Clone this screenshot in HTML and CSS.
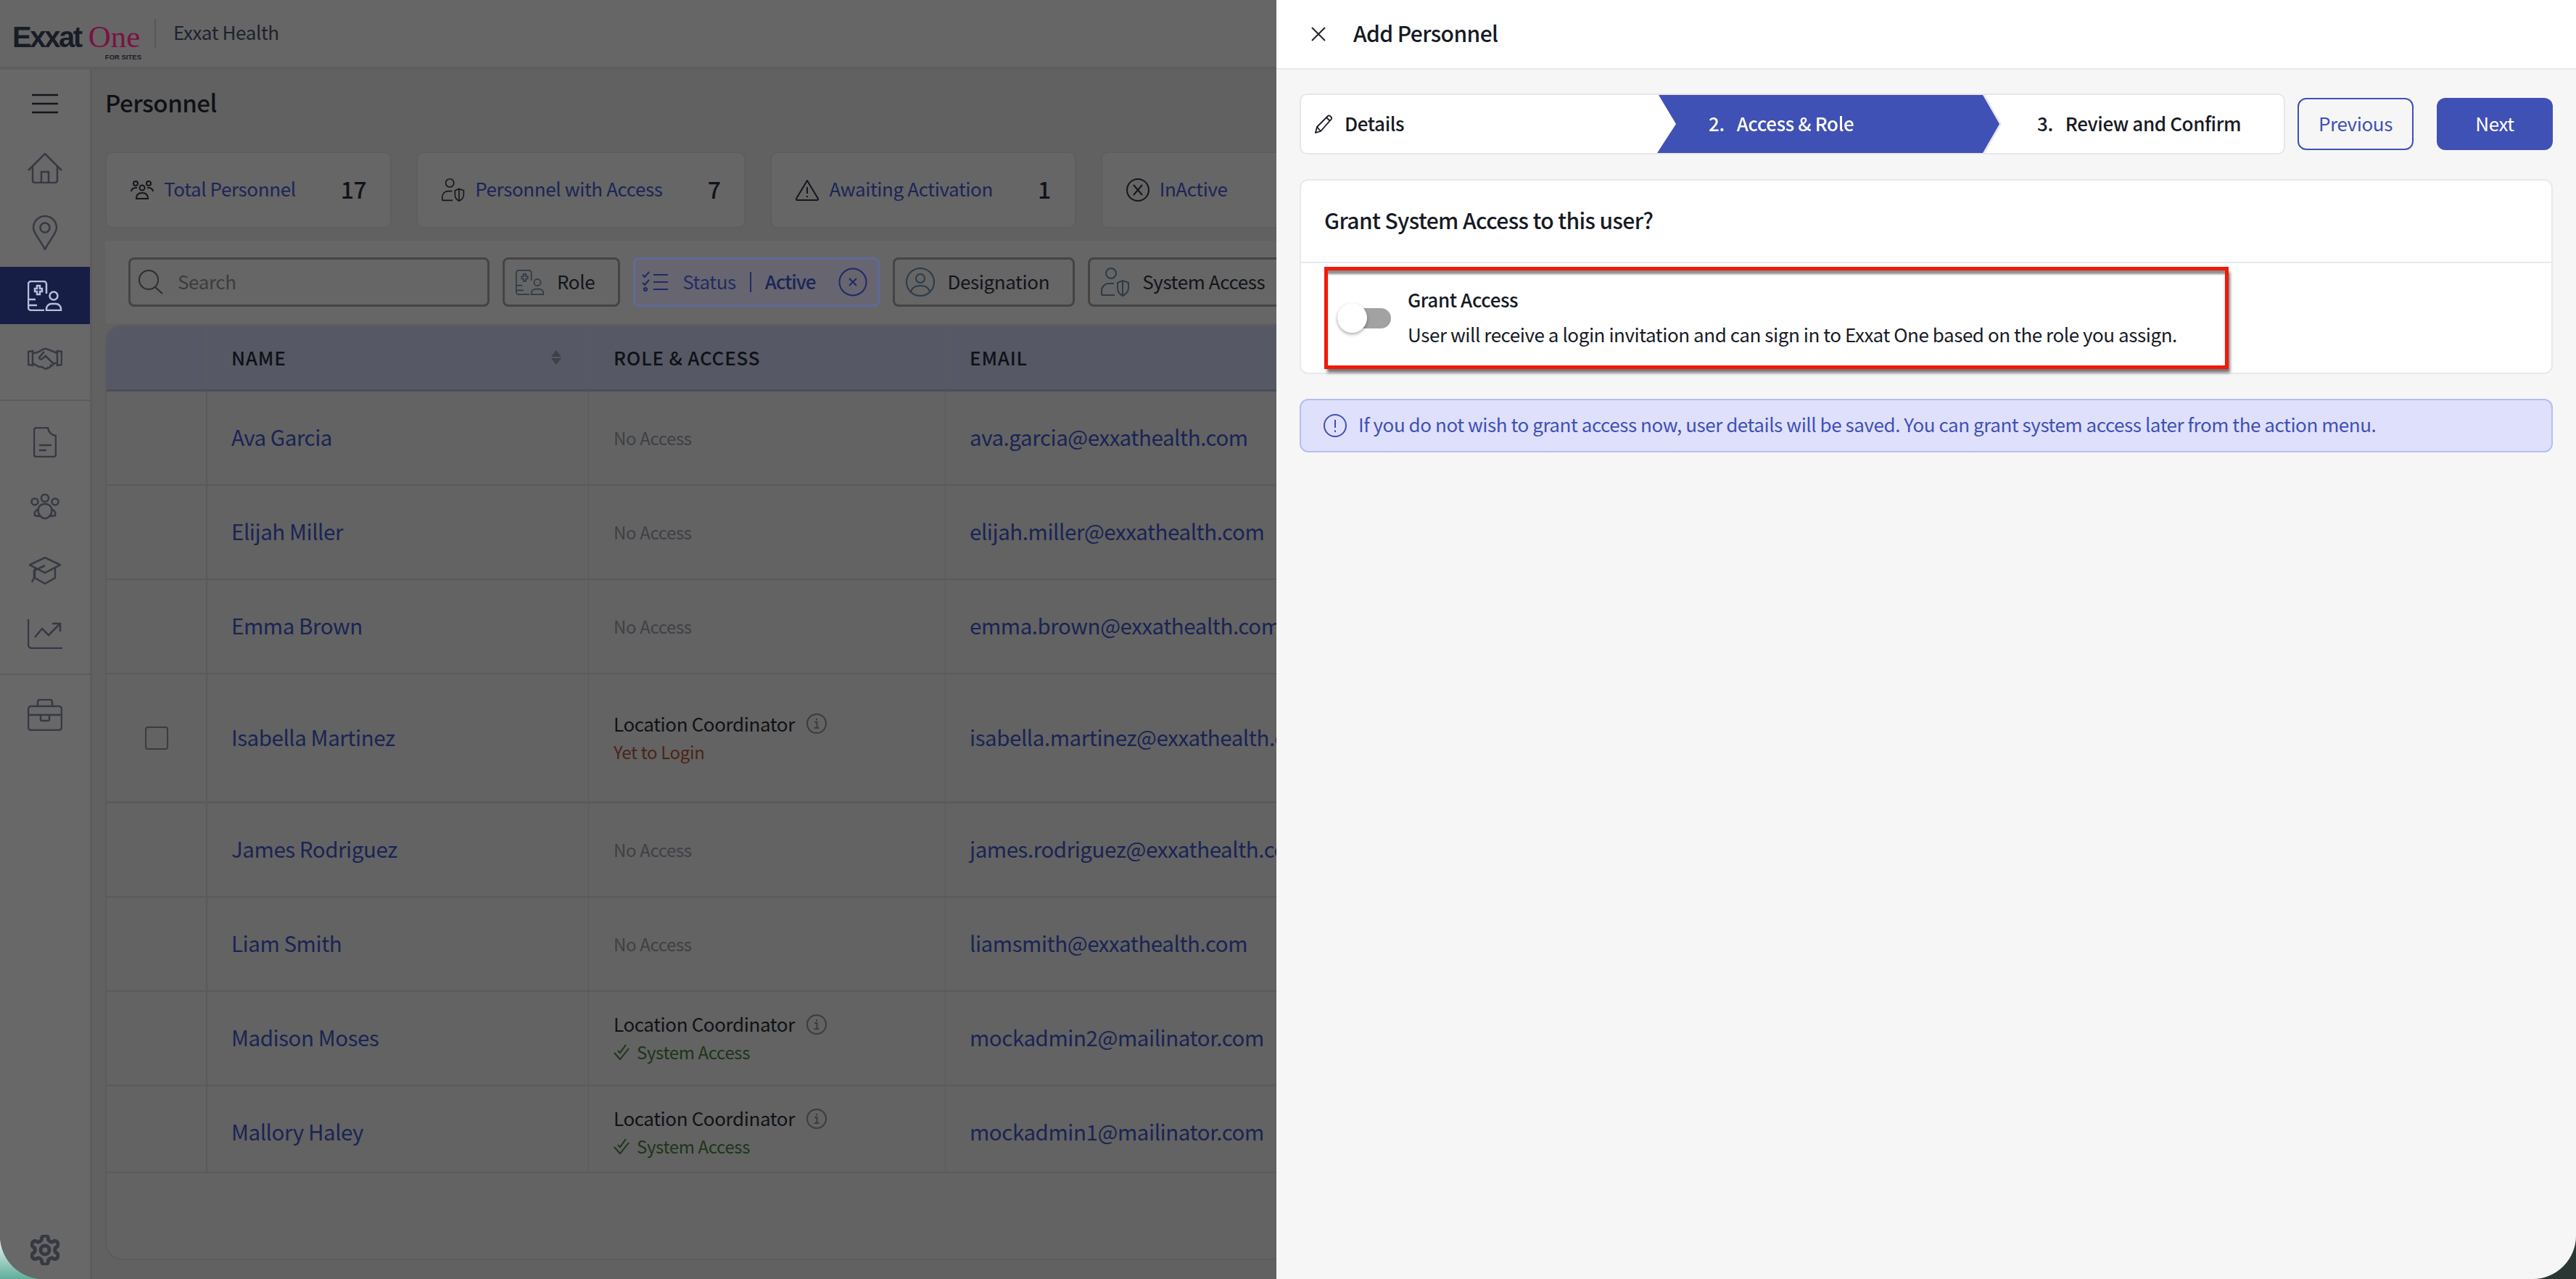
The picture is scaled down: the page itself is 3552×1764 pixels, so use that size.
FILE: index.html
```html
<!DOCTYPE html>
<html lang="en">
<head>
<meta charset="UTF-8" />
<title>Personnel - Exxat One</title>
<link rel="stylesheet" href="styles.css">
</head>
<body>
<svg class="defs" width="0" height="0">
  <symbol id="i-role" viewBox="0 0 48 42">
    <path d="M23 41H5a4 4 0 0 1-4-4V5a4 4 0 0 1 4-4h17a4 4 0 0 1 4 4v13" />
    <path d="M10 11h3V7h4v4h3v4h-3v4h-4v-4h-3z" />
    <path d="M1 26h10M1 34h12" />
    <circle cx="36" cy="21" r="5.5" />
    <path d="M26 41v-2a7 7 0 0 1 7-7h6a7 7 0 0 1 7 7v2z" />
  </symbol>
  <symbol id="i-user-shield" viewBox="0 0 40 40">
    <circle cx="14" cy="8" r="7" />
    <path d="M1 38v-6a10 10 0 0 1 10-10h7M1 38h18" />
    <path d="M23 21l7-3 8 3v7c0 5-4 9-8 11-4-2-7-6-7-11zM30 18v21" />
  </symbol>
</svg>

<div class="window">
  <header class="topbar">
    <div class="logo">
      <div class="logo-mark"><span class="logo-exxat">Exxat</span><span class="logo-one">One</span></div>
      <div class="logo-sub">FOR SITES</div>
    </div>
    <div class="org">Exxat Health</div>
  </header>

  <div class="main">
    <nav class="sidebar">
      <div class="nav-item nav-menu">
        <svg width="36" height="28" viewBox="0 0 36 28"><path d="M0 2h36M0 14h36M0 26h36" /></svg>
      </div>
      <div class="nav-item nav-home">
        <svg width="48" height="42" viewBox="0 0 48 42"><path d="M1 24L24 1l23 23M7 18v20a3 3 0 0 0 3 3h28a3 3 0 0 0 3-3V18M19 41V26h10v15" /></svg>
      </div>
      <div class="nav-item nav-pin">
        <svg width="34" height="48" viewBox="0 0 34 48"><path d="M17 47C10 33 1 25 1 17a16 16 0 0 1 32 0c0 8-9 16-16 30z" /><circle cx="17" cy="17" r="6.5" /></svg>
      </div>
      <div class="nav-item nav-active">
        <svg width="48" height="42"><use href="#i-role" /></svg>
      </div>
      <div class="nav-item nav-deal">
        <svg width="48" height="32" viewBox="0 0 48 32"><path d="M1 6l6-1v20l-6-1zM47 6l-6-1v20l6-1zM7 8c5 0 8-1 12-4 3-2 6-3 9-1l13 5M41 22l-6 0-10-10-5 4c-2 1-4 0-4-2l7-8M35 22c1 2-1 4-3 3 0 2-2 4-4 3-1 2-3 2-5 1l-3-2-4 0-9-5" /></svg>
      </div>
      <div class="nav-item nav-doc">
        <svg width="32" height="42" viewBox="0 0 32 42"><path d="M4 1h16c1 6 5 10 11 11v26a3 3 0 0 1-3 3H4a3 3 0 0 1-3-3V4a3 3 0 0 1 3-3zM8 25h17M8 32h10" /></svg>
      </div>
      <div class="nav-item nav-people">
        <svg width="42" height="36" viewBox="0 0 42 36"><circle cx="21" cy="6" r="5" /><circle cx="7" cy="11" r="4.5" /><circle cx="35" cy="11" r="4.5" /><path d="M12 21c0-4 4-7 9-7s9 3 9 7c5 2 6 6 5 9-4 1-6 1-8 1-3 4-9 4-12 0-2 0-4 0-8-1-1-3 0-7 5-9zM12 21c-1 4 1 8 3 10M30 21c1 4-1 8-3 10" /></svg>
      </div>
      <div class="nav-item nav-grad">
        <svg width="44" height="38" viewBox="0 0 44 38"><path d="M22 1l21 10-21 11L1 11zM8 15v14l14 8 14-8V15M22 12L7 19v10l-3 6" /></svg>
      </div>
      <div class="nav-item nav-chart">
        <svg width="48" height="42" viewBox="0 0 48 42"><path d="M1 1v35a5 5 0 0 0 5 5h42M10 26l10-12 9 9 16-16M34 7h11v11" /></svg>
      </div>
      <div class="nav-item nav-bag">
        <svg width="48" height="44" viewBox="0 0 48 44"><rect x="1" y="10" width="46" height="33" rx="4" /><path d="M14 10V4a3 3 0 0 1 3-3h14a3 3 0 0 1 3 3v6M1 22h17M30 22h17M18 22h12v6a2 2 0 0 1-2 2h-8a2 2 0 0 1-2-2z" /></svg>
      </div>
      <div class="nav-item nav-gear">
        <svg width="40" height="42" viewBox="2 1.500 20 21"><path d="M12.220 2h-.44a2 2 0 0 0-2 2v.18a2 2 0 0 1-1 1.730l-.43.25a2 2 0 0 1-2 0l-.15-.08a2 2 0 0 0-2.730.73l-.22.38a2 2 0 0 0 .73 2.730l.15.1a2 2 0 0 1 1 1.720v.51a2 2 0 0 1-1 1.740l-.15.09a2 2 0 0 0-.73 2.730l.22.38a2 2 0 0 0 2.730.73l.15-.08a2 2 0 0 1 2 0l.43.25a2 2 0 0 1 1 1.730V20a2 2 0 0 0 2 2h.44a2 2 0 0 0 2-2v-.18a2 2 0 0 1 1-1.730l.43-.25a2 2 0 0 1 2 0l.15.08a2 2 0 0 0 2.730-.73l.22-.39a2 2 0 0 0-.73-2.730l-.15-.08a2 2 0 0 1-1-1.740v-.5a2 2 0 0 1 1-1.740l.15-.09a2 2 0 0 0 .73-2.730l-.22-.38a2 2 0 0 0-2.730-.73l-.15.08a2 2 0 0 1-2 0l-.43-.25a2 2 0 0 1-1-1.730V4a2 2 0 0 0-2-2z" /><circle cx="12" cy="12" r="3" /></svg>
      </div>
    </nav>

    <section class="content">
      <h1 class="page-title">Personnel</h1>

      <div class="stats">
        <div class="stat">
          <svg class="stat-icon" width="32" height="26" viewBox="0 0 32 26"><circle cx="16" cy="10" r="3.500" /><circle cx="7" cy="4" r="3" /><circle cx="25" cy="4" r="3" /><path d="M1 15c0-3 3-5 6-5h2M31 15c0-3-3-5-6-5h-2M8 25c0-5 3-8 8-8s8 3 8 8z" /></svg>
          <span class="stat-label">Total Personnel</span><b class="stat-num">17</b>
        </div>
        <div class="stat">
          <svg class="stat-icon ln" width="32" height="32"><use href="#i-user-shield" /></svg>
          <span class="stat-label">Personnel with Access</span><b class="stat-num">7</b>
        </div>
        <div class="stat">
          <svg class="stat-icon" width="32" height="29" viewBox="0 0 32 29"><path d="M16 1l15 25a1.500 1.500 0 0 1-1 2H2a1.500 1.500 0 0 1-1-2zM16 10v9M16 22v2" /></svg>
          <span class="stat-label">Awaiting Activation</span><b class="stat-num">1</b>
        </div>
        <div class="stat">
          <svg class="stat-icon" width="32" height="32" viewBox="0 0 32 32"><circle cx="16" cy="16" r="15" /><path d="M10 9l12 14M22 9L10 23" /></svg>
          <span class="stat-label">InActive</span><b class="stat-num">9</b>
        </div>
      </div>

      <div class="filters">
        <div class="search">
          <svg width="34" height="34" viewBox="0 0 34 34"><circle cx="14" cy="14" r="13" /><path d="M23 24l10 9" /></svg>
          <span>Search</span>
        </div>
        <div class="chip">
          <svg class="ln" width="40" height="35"><use href="#i-role" /></svg>
          <span>Role</span>
        </div>
        <div class="chip chip-on">
          <svg width="36" height="30" viewBox="0 0 36 30"><path d="M1 5l3 3 6-7M1 16l3 3 6-7M16 5h20M16 15h20M16 25h20" /><circle cx="5" cy="25" r="2" /></svg>
          <span class="chip-key">Status</span>
          <i class="chip-sep"></i>
          <b class="chip-val">Active</b>
          <svg class="chip-x" width="40" height="40" viewBox="0 0 40 40"><circle cx="20" cy="20" r="18.500" /><path d="M15 15l10 10M25 15L15 25" /></svg>
        </div>
        <div class="chip">
          <svg class="ln" width="40" height="40" viewBox="0 0 40 40"><circle cx="20" cy="20" r="19" /><circle cx="20" cy="15" r="6" /><path d="M7 33c2-6 7-8 13-8s11 2 13 8" /></svg>
          <span>Designation</span>
        </div>
        <div class="chip">
          <svg class="ln" width="40" height="40"><use href="#i-user-shield" /></svg>
          <span>System Access</span>
        </div>
      </div>

      <div class="table">
        <div class="row head">
          <div class="cell cell-check"></div>
          <div class="cell cell-name">NAME
            <svg class="sort" width="16" height="20" viewBox="0 0 16 20"><path d="M8 0l7 9H1zM1 11h14l-7 9z" /></svg>
          </div>
          <div class="cell cell-role">ROLE &amp; ACCESS</div>
          <div class="cell cell-mail">EMAIL</div>
        </div>
        <div class="rows">
          <div class="row">
            <div class="cell cell-check"></div>
            <div class="cell cell-name">Ava Garcia</div>
            <div class="cell cell-role"><span class="none">No Access</span></div>
            <div class="cell cell-mail">ava.garcia@exxathealth.com</div>
          </div>
          <div class="row">
            <div class="cell cell-check"></div>
            <div class="cell cell-name">Elijah Miller</div>
            <div class="cell cell-role"><span class="none">No Access</span></div>
            <div class="cell cell-mail">elijah.miller@exxathealth.com</div>
          </div>
          <div class="row">
            <div class="cell cell-check"></div>
            <div class="cell cell-name">Emma Brown</div>
            <div class="cell cell-role"><span class="none">No Access</span></div>
            <div class="cell cell-mail">emma.brown@exxathealth.com</div>
          </div>
          <div class="row row-tall">
            <div class="cell cell-check"><i class="checkbox"></i></div>
            <div class="cell cell-name">Isabella Martinez</div>
            <div class="cell cell-role">
              <div class="role-name">Location Coordinator
                <svg width="28" height="28" viewBox="0 0 28 28"><circle cx="14" cy="14" r="13" /><path d="M11 12h3.500v8M10.500 20h7M14 7v2.500" /></svg>
              </div>
              <div class="role-wait">Yet to Login</div>
            </div>
            <div class="cell cell-mail">isabella.martinez@exxathealth.com</div>
          </div>
          <div class="row">
            <div class="cell cell-check"></div>
            <div class="cell cell-name">James Rodriguez</div>
            <div class="cell cell-role"><span class="none">No Access</span></div>
            <div class="cell cell-mail">james.rodriguez@exxathealth.com</div>
          </div>
          <div class="row">
            <div class="cell cell-check"></div>
            <div class="cell cell-name">Liam Smith</div>
            <div class="cell cell-role"><span class="none">No Access</span></div>
            <div class="cell cell-mail">liamsmith@exxathealth.com</div>
          </div>
          <div class="row">
            <div class="cell cell-check"></div>
            <div class="cell cell-name">Madison Moses</div>
            <div class="cell cell-role">
              <div class="role-name">Location Coordinator
                <svg width="28" height="28" viewBox="0 0 28 28"><circle cx="14" cy="14" r="13" /><path d="M11 12h3.500v8M10.500 20h7M14 7v2.500" /></svg>
              </div>
              <div class="role-ok">
                <svg width="22" height="22" viewBox="0 0 22 22"><path d="M1 12l8 9L21 6M6 9l3 3 8-11" /></svg>
                System Access
              </div>
            </div>
            <div class="cell cell-mail">mockadmin2@mailinator.com</div>
          </div>
          <div class="row">
            <div class="cell cell-check"></div>
            <div class="cell cell-name">Mallory Haley</div>
            <div class="cell cell-role">
              <div class="role-name">Location Coordinator
                <svg width="28" height="28" viewBox="0 0 28 28"><circle cx="14" cy="14" r="13" /><path d="M11 12h3.500v8M10.500 20h7M14 7v2.500" /></svg>
              </div>
              <div class="role-ok">
                <svg width="22" height="22" viewBox="0 0 22 22"><path d="M1 12l8 9L21 6M6 9l3 3 8-11" /></svg>
                System Access
              </div>
            </div>
            <div class="cell cell-mail">mockadmin1@mailinator.com</div>
          </div>
        </div>
      </div>
    </section>
  </div>

  <aside class="drawer">
    <div class="drawer-head">
      <svg width="20" height="20" viewBox="0 0 20 20"><path d="M1 1l18 18M19 1L1 19" /></svg>
      <h2>Add Personnel</h2>
    </div>
    <div class="drawer-body">
      <div class="wizard">
        <div class="stepper">
          <div class="step step-done">
            <svg width="26" height="26" viewBox="0 0 26 26"><path d="M1 25l2-8L18 2c2-2 6 2 5 4L8 23zM3 17l5 6M16 4l5 5" /></svg>
            Details
          </div>
          <div class="step-outline">
            <div class="step step-current"><span class="step-no">2.</span>Access &amp; Role</div>
          </div>
          <div class="step step-next"><span class="step-no">3.</span>Review and Confirm</div>
        </div>
        <button class="btn btn-ghost">Previous</button>
        <button class="btn btn-fill">Next</button>
      </div>

      <div class="card">
        <div class="card-title">Grant System Access to this user?</div>
        <div class="callout">
          <div class="toggle"><i class="toggle-knob"></i></div>
          <div class="callout-text">
            <div class="callout-title">Grant Access</div>
            <div class="callout-desc">User will receive a login invitation and can sign in to Exxat One based on the role you assign.</div>
          </div>
        </div>
      </div>

      <div class="notice">
        <svg width="32" height="32" viewBox="0 0 32 32"><circle cx="16" cy="16" r="15" /><path d="M16 8v11M16 22.500v2.500" /></svg>
        <span>If you do not wish to grant access now, user details will be saved. You can grant system access later from the action menu.</span>
      </div>
    </div>
  </aside>
</div>
</body>
</html>
```

FILE: styles.css
```css
* {
  box-sizing: border-box;
  letter-spacing: -.015em;
}

html, body {
  margin: 0;
  height: 100%;
  overflow: hidden;
}

body {
  font-family: "Noto Sans CJK SC", "Noto Sans", sans-serif;
  background:
    linear-gradient(180deg, #e6f1ee 0, #e6f1ee 97%, #5fae9c 100%) left / 50% 100% no-repeat,
    #2b3733;
  color: #0f1116;
}

svg {
  fill: none;
  stroke: currentColor;
  stroke-width: 2;
  flex: none;
}

.defs {
  position: absolute;
}

.window {
  position: relative;
  width: 3552px;
  height: 1764px;
  overflow: hidden;
  border-radius: 0 0 60px 60px;
  background: #616161;
}

/* top bar */
.topbar {
  display: flex;
  align-items: center;
  height: 96px;
  padding-left: 17px;
  background: #666;
  border-bottom: 4px solid #5e5e62;
}

.logo {
  width: 178px;
  padding-top: 22px;
}

.logo-mark {
  display: flex;
  align-items: baseline;
  height: 40px;
  line-height: 40px;
}

.logo-exxat {
  font-family: "Liberation Sans", sans-serif;
  font-weight: bold;
  font-size: 40px;
  letter-spacing: -2.400px;
  color: #181c26;
}

.logo-one {
  margin-left: 10px;
  font-family: "Liberation Serif", serif;
  font-size: 43px;
  letter-spacing: 0;
  color: #7c1143;
}

.logo-sub {
  margin-top: 3px;
  text-align: right;
  font-family: "Liberation Sans", sans-serif;
  font-size: 9.500px;
  line-height: 10px;
  letter-spacing: 0;
  font-weight: bold;
  color: #181c26;
}

.org {
  margin: 0 0 0 18px;
  padding: 0 0 4px 24px;
  height: 40px;
  line-height: 36px;
  border-left: 2px solid #55565c;
  font-size: 26px;
  color: #1d222e;
}

.main {
  display: flex;
  height: 1668px;
}

/* sidebar */
.sidebar {
  position: relative;
  flex: none;
  width: 127px;
  background: #686868;
  border-right: 3px solid #5c5c5e;
  color: #363944;
}

.sidebar svg {
  stroke-width: 2.500;
}

.nav-item {
  display: flex;
  align-items: center;
  justify-content: center;
}

.nav-menu { height: 94px; color: #14161c; }
.nav-home { height: 84px; }
.nav-pin { height: 94px; }
.nav-active { height: 79px; background: #161e46; color: #b9bedb; }
.nav-deal { height: 106px; padding-bottom: 8px; border-bottom: 2px solid #5c5c5e; }
.nav-doc { height: 114px; }
.nav-people { height: 64px; }
.nav-grad { height: 112px; }
.nav-chart { height: 88px; padding-bottom: 25px; border-bottom: 2px solid #5c5c5e; }
.nav-bag { height: 110px; }

.nav-gear {
  position: absolute;
  left: 0;
  right: 0;
  bottom: 19px;
}

/* page */
.content {
  flex: 1;
  min-width: 0;
  padding-left: 18px;
  overflow: hidden;
}

.page-title {
  margin: 0;
  height: 113px;
  line-height: 90px;
  font-size: 33px;
  font-weight: 500;
  color: #0f1116;
}

.stats {
  display: flex;
  gap: 34px;
}

.stat {
  display: flex;
  flex: none;
  align-items: center;
  height: 106px;
  padding: 0 33px;
  background: #666;
  border: 2px solid #5e5e5e;
  border-radius: 10px;
  color: #14161c;
}

.stat-icon {
  margin-right: 14px;
}

.ln {
  stroke-width: 2;
}

.stat-label {
  margin-bottom: 4px;
  font-size: 26px;
  line-height: 36px;
  color: #1b2556;
}

.stat-num {
  margin: 0 0 4px 62px;
  font-size: 32px;
  line-height: 36px;
  font-weight: 500;
  color: #11131a;
}

.stat:last-child .stat-num {
  margin-left: 68px;
}

.filters {
  display: flex;
  gap: 18px;
  align-items: center;
  height: 114px;
  margin-top: 17px;
  padding-left: 32px;
  background: #666;
}

.search, .chip {
  display: flex;
  flex: none;
  align-items: center;
  height: 68px;
  font-size: 26px;
  border: 3px solid #444;
  border-radius: 8px;
}

.search {
  width: 498px;
  padding-left: 11px;
  color: #2e2e30;
}

.search span, .chip span, .chip b {
  margin-bottom: 3px;
}

.search span {
  margin-left: 20px;
  color: #3c3c3e;
}

.chip {
  padding: 0 32px 0 15px;
  color: #12141a;
}

.chip > svg {
  margin-right: 17px;
  color: #2d3a48;
}

.chip-on {
  border: 3px solid #5f6a9a;
  background: #676570;
  padding: 0 14px 0 9px;
  color: #1f2a62;
}

.chip-on > svg {
  color: #1f2a62;
  margin-right: 20px;
}

.chip-key {
  color: #222c63;
}

.chip-sep {
  width: 2px;
  height: 28px;
  margin: 0 19px;
  background: #222c63;
}

.chip-val {
  font-weight: 500;
  letter-spacing: -.04em;
  color: #1b2556;
}

.chip-on > .chip-x {
  margin: 0 0 0 32px;
}

/* table */
.table {
  margin-top: 2px;
  height: 1290px;
  border: 2px solid #5b5b5f;
  border-radius: 24px 0 0 24px;
  border-right: 0;
  overflow: hidden;
  background: #636363;
}

.row {
  display: flex;
  width: 2000px;
  height: 130px;
  border-bottom: 2px solid #5a5a5e;
}

.row-tall {
  height: 178px;
  border-bottom-width: 3px;
}

.head {
  height: 90px;
  background: #565865;
  border-bottom: 3px solid #4c4d58;
  color: #0f1116;
}

.rows {
  height: 1078px;
  overflow: hidden;
  border-bottom: 2px solid #5a5a5e;
}

.cell {
  display: flex;
  flex: none;
  flex-direction: column;
  justify-content: center;
  align-items: flex-start;
  padding-bottom: 4px;
  border-right: 1px solid #5a5a5e;
}

.cell-check {
  width: 139px;
  align-items: center;
  padding-bottom: 0;
  border-right: 2px solid #5a5a5e;
}

.cell-name {
  position: relative;
  width: 526px;
  padding-left: 33px;
  font-size: 29.500px;
  color: #1a2454;
}

.head .cell-name, .head .cell-role, .head .cell-mail {
  padding-bottom: 2px;
  font-size: 26px;
  font-weight: 500;
  letter-spacing: .03em;
  color: #0f1116;
}

.sort {
  position: absolute;
  right: 36px;
  top: 33px;
  fill: #3e4048;
  stroke: none;
}

.cell-role {
  width: 492px;
  padding: 0 0 2px 34px;
  font-size: 24px;
}

.cell-mail {
  flex: 1;
  padding-left: 33px;
  font-size: 29.500px;
  color: #1a2454;
}

.none {
  font-size: 24px;
  color: #3e4045;
}

.checkbox {
  width: 32px;
  height: 32px;
  border: 2px solid #3c3c3e;
  border-radius: 4px;
}

.role-name {
  display: flex;
  align-items: center;
  height: 39px;
  font-size: 26px;
  color: #0f1116;
}

.role-name svg {
  margin: 2px 0 0 16px;
  color: #3c3c3e;
}

.role-wait, .role-ok {
  display: flex;
  align-items: center;
  height: 39px;
  font-size: 24px;
}

.role-wait {
  color: #4a2416;
}

.role-ok {
  color: #1c3518;
}

.role-ok svg {
  margin-right: 10px;
}

/* drawer */
.drawer {
  position: absolute;
  top: 0;
  right: 0;
  bottom: 0;
  width: 1792px;
  background: #f6f6f6;
}

.drawer-head {
  display: flex;
  align-items: center;
  height: 96px;
  padding-left: 48px;
  background: #fff;
  border-bottom: 2px solid #e8e8ee;
  color: #20232c;
}

.drawer-head h2 {
  margin: 0 0 4px 38px;
  font-size: 30px;
  font-weight: 500;
  letter-spacing: -.02em;
  color: #161a24;
}

.drawer-body {
  padding: 33px 32px 0;
}

.wizard {
  display: flex;
  align-items: center;
  gap: 17px;
}

.stepper {
  display: flex;
  width: 1359px;
  height: 84px;
  background: #fff;
  border: 2px solid #e6e6ec;
  border-radius: 10px;
  font-size: 26px;
  font-weight: 500;
  color: #161a24;
}

.step {
  display: flex;
  align-items: center;
  height: 80px;
  padding-bottom: 4px;
}

.step-done {
  width: 491px;
  padding-left: 19px;
}

.step-done svg {
  margin: 4px 15px 0 0;
  stroke-width: 1.800;
}

.step-outline {
  filter: drop-shadow(3px 0 0 #e8e8ee);
}

.step-current {
  width: 472px;
  padding-left: 71px;
  background: #4051b5;
  color: #fff;
  clip-path: polygon(2px 0, calc(100% - 23px) 0, 100% 50%, calc(100% - 23px) 100%, 0 100%, 26px 50%);
}

.step-no {
  margin-right: 17px;
}

.step-next {
  padding-left: 52px;
}

.btn {
  width: 160px;
  height: 72px;
  padding-bottom: 4px;
  font: inherit;
  font-size: 26px;
  border-radius: 12px;
}

.btn-ghost {
  background: transparent;
  border: 2px solid #4051b5;
  color: #4051b5;
}

.btn-fill {
  margin-left: 15px;
  background: #4051b5;
  border: 0;
  color: #fff;
}

.card {
  height: 269px;
  margin-top: 34px;
  background: #fff;
  border: 2px solid #e8e8ee;
  border-radius: 12px;
}

.card-title {
  height: 114px;
  padding-left: 32px;
  line-height: 108px;
  font-size: 30px;
  font-weight: 500;
  letter-spacing: -.02em;
  color: #161a24;
  border-bottom: 2px solid #e8e8ee;
}

/* annotation box drawn over the screenshot */
.callout {
  display: flex;
  align-items: center;
  width: 1247px;
  height: 141px;
  margin: 5px 0 0 32px;
  padding-left: 13px;
  border: 5px solid #f01a0a;
  box-shadow: 3px 6px 4px -1px rgba(0, 0, 0, .55), inset 0 6px 3px -1px rgba(0, 0, 0, .45);
}

.toggle {
  position: relative;
  flex: none;
  width: 74px;
  height: 28px;
  margin-right: 23px;
  background: #a2a2a2;
  border-radius: 14px;
}

.toggle-knob {
  position: absolute;
  left: 0;
  top: -7px;
  width: 41px;
  height: 41px;
  background: #fff;
  border-radius: 50%;
  box-shadow: 0 2px 4px rgba(0, 0, 0, .35);
}

.callout-title {
  height: 48px;
  line-height: 44px;
  font-size: 26px;
  font-weight: 500;
  color: #161a24;
}

.callout-desc {
  height: 48px;
  line-height: 44px;
  font-size: 26px;
  letter-spacing: -.017em;
  color: #161a24;
}

.notice {
  display: flex;
  align-items: center;
  height: 74px;
  margin-top: 34px;
  padding-left: 31px;
  background: #dfe0fb;
  border: 2px solid #b6bdf5;
  border-radius: 12px;
  font-size: 26px;
  color: #4051b5;
}

.notice span {
  margin-bottom: 6px;
  letter-spacing: -.017em;
}

.notice svg {
  margin-right: 16px;
}
```
